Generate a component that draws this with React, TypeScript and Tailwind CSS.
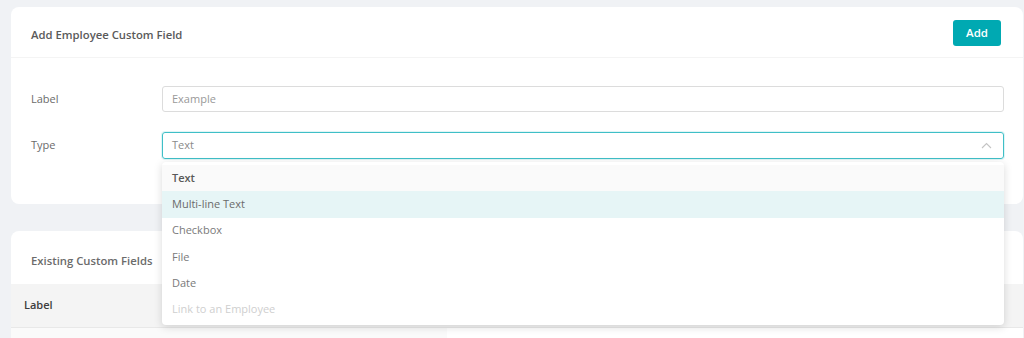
import React from 'react'

const options = [
  { label: 'Text', selected: true },
  { label: 'Multi-line Text', active: true },
  { label: 'Checkbox' },
  { label: 'File' },
  { label: 'Date' },
  { label: 'Link to an Employee', disabled: true },
]

const App: React.FC = () => {
  return (
    <div
      className="min-h-[338px] h-[338px] overflow-hidden bg-[#f0f2f5] pt-[7px] pl-[11px] pr-[1px] text-[11px]"
      style={{ fontFamily: '"Open Sans", "Noto Sans", sans-serif' }}
    >
      {/* Add card */}
      <div className="bg-white rounded-lg">
        <div className="h-[51px] flex items-center justify-between pl-5 pr-[22px] border-b border-[#f4f4f4]">
          <span className="mt-[7px] text-[11.3px] font-semibold text-[#5a5a5a]">Add Employee Custom Field</span>
          <button className="h-[26px] w-12 mt-[1px] rounded-[3px] bg-[#00a9b2] text-white text-[11.5px] font-semibold">
            Add
          </button>
        </div>
        <div className="pt-[28px] pb-[45px] pl-5 pr-[19px] flex flex-col gap-5">
          <div className="flex items-center">
            <span className="w-[131px] text-[#6b6b6b] mt-[1px]">Label</span>
            <div className="flex-1 h-[26px] rounded-[3px] border border-[#dcdcdc] px-[9px] flex items-center text-[#999]">
              Example
            </div>
          </div>
          <div className="flex items-center">
            <span className="w-[131px] text-[#6b6b6b]">Type</span>
            <div className="relative flex-1">
              <div className="h-[27px] rounded-[3px] border border-[#3fbfc7] shadow-[0_0_0_1px_rgba(0,169,178,0.12)] px-[9px] flex items-center justify-between text-[#8a8a8a]">
                <span>Text</span>
                <svg width="11" height="7" viewBox="0 0 11 7" className="mr-[2px]">
                  <polyline points="1,6 5.5,1.5 10,6" fill="none" stroke="#c4c4c4" strokeWidth="1.1" />
                </svg>
              </div>
              {/* dropdown */}
              <div className="absolute z-10 left-0 right-0 top-[30px] bg-white rounded-[4px] pt-[3px] pb-[2px] shadow-[0_2px_8px_rgba(0,0,0,0.15)]">
                {options.map((o) => (
                  <div
                    key={o.label}
                    className={
                      'h-[26.3px] px-[10px] flex items-center ' +
                      (o.selected
                        ? 'bg-[#fafafa] font-semibold text-[#595959]'
                        : o.active
                        ? 'bg-[#e6f5f6] text-[#6b6b6b]'
                        : o.disabled
                        ? 'text-[#cfcfcf]'
                        : 'text-[#7a7a7a]')
                    }
                  >
                    {o.label}
                  </div>
                ))}
              </div>
            </div>
          </div>
        </div>
      </div>

      {/* Existing card */}
      <div className="mt-[27px] bg-white rounded-t-lg">
        <div className="h-[53px] flex items-center pl-5 pt-[7px]">
          <span className="text-[11.3px] font-semibold text-[#6b6b6b]">Existing Custom Fields</span>
        </div>
        <div className="h-[44px] bg-[#f4f4f4] border-b border-[#e8e8e8] flex items-center pl-[13px]">
          <span className="font-semibold text-[#3d3d3d]">Label</span>
        </div>
        <div className="flex h-[20px]">
          <div className="w-[436px] bg-[#fafafa]" />
          <div className="flex-1 bg-white" />
        </div>
      </div>
    </div>
  )
}

export default App
